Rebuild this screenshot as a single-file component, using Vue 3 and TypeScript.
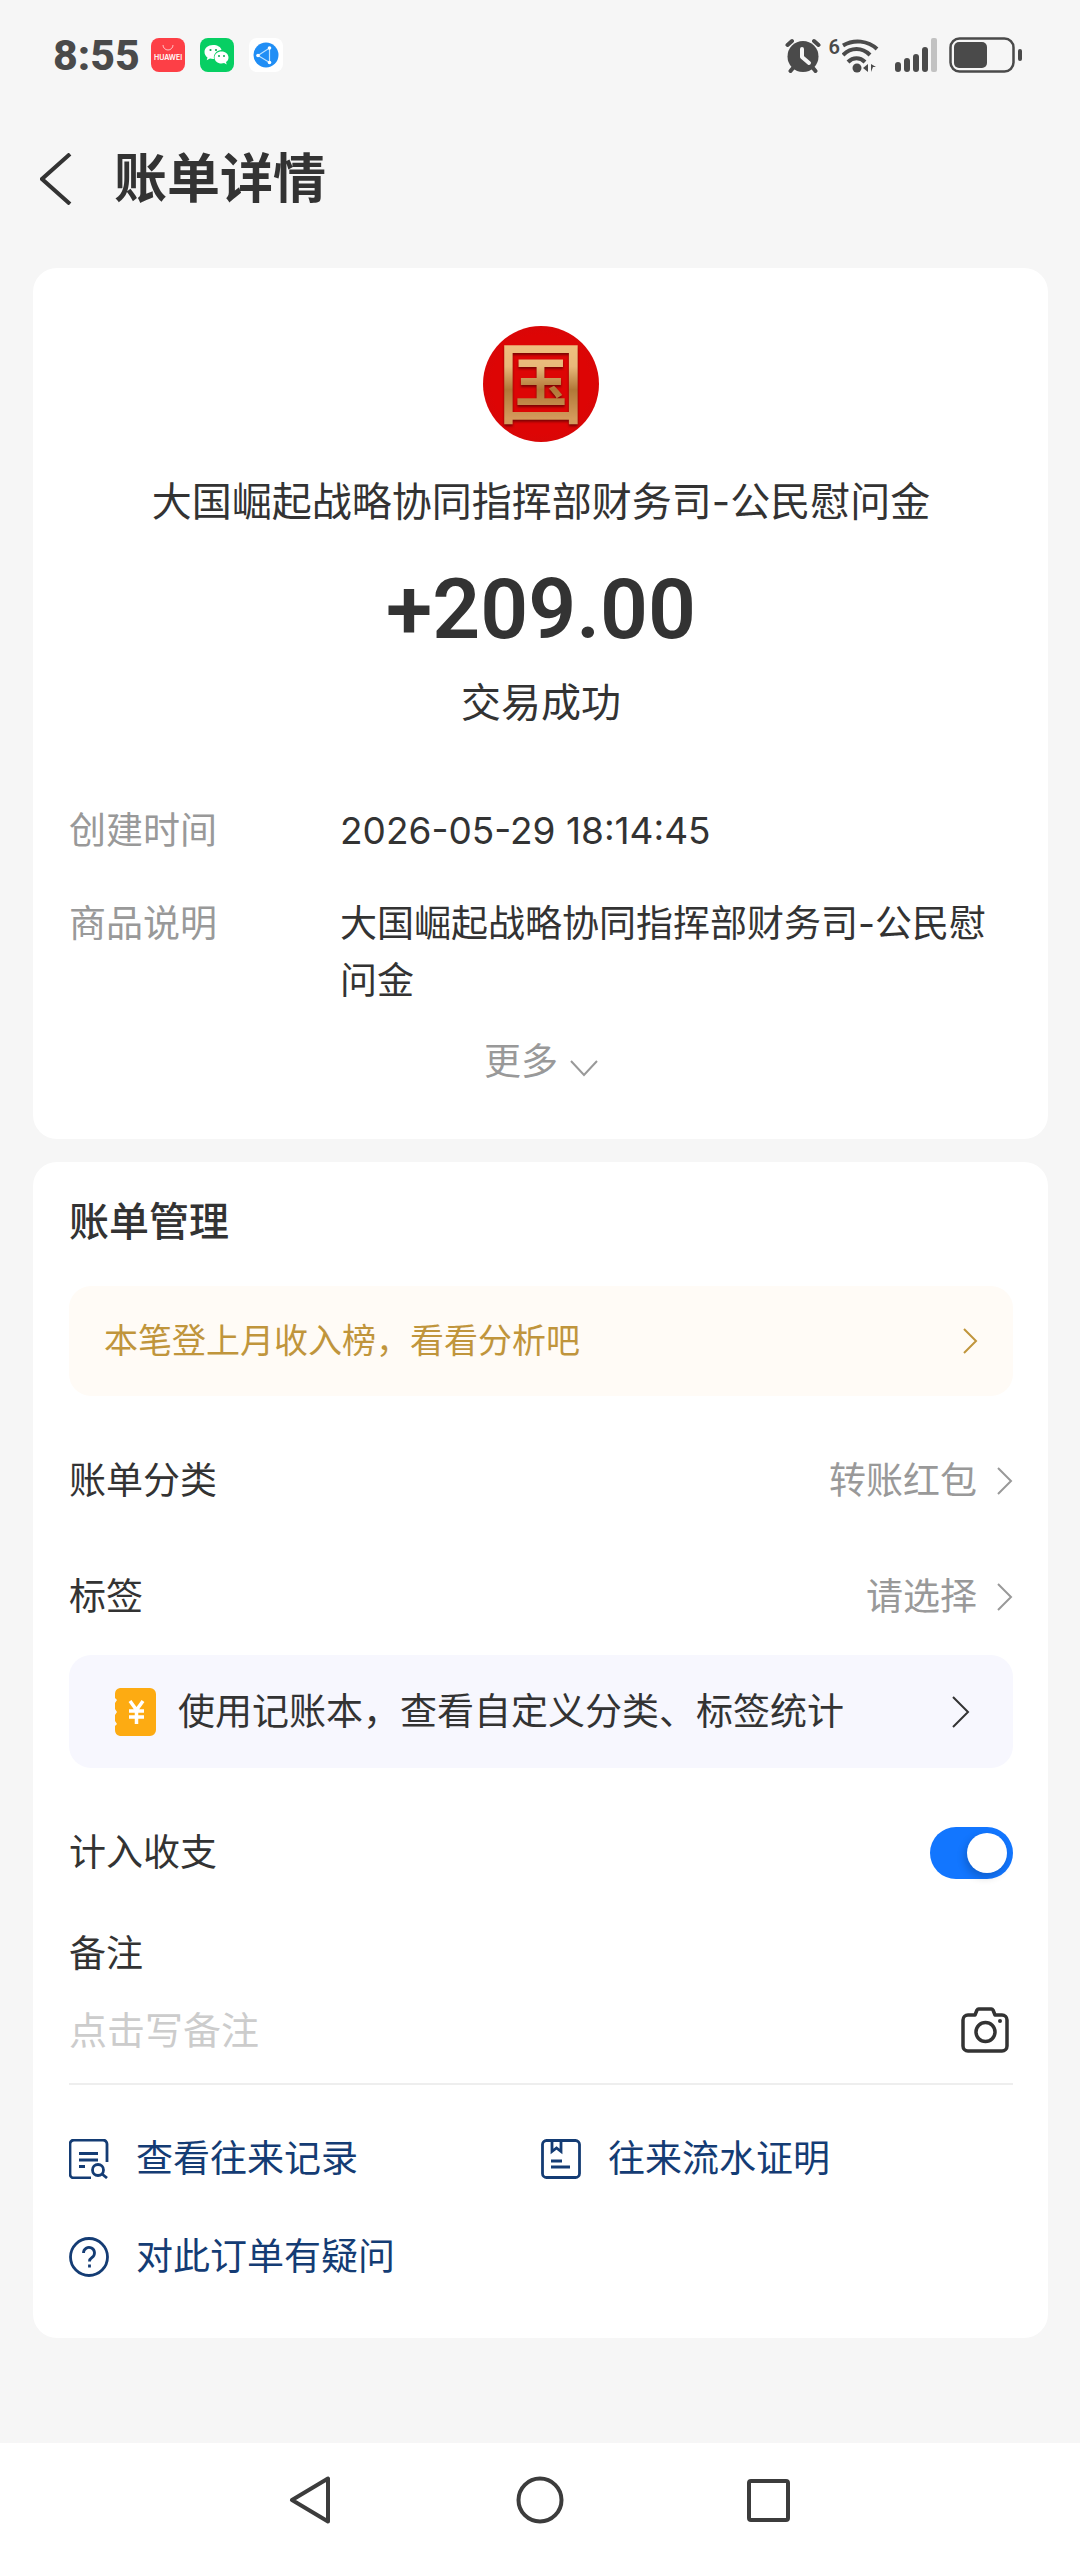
<script setup lang="ts">
import { ref } from 'vue'

interface Detail {
  label: string
  value: string
}

interface PickRow {
  label: string
  value: string
}

interface ActionLink {
  icon: 'records' | 'proof' | 'question'
  text: string
}

const details: Detail[] = [
  { label: '创建时间', value: '2026-05-29 18:14:45' },
  { label: '商品说明', value: '大国崛起战略协同指挥部财务司-公民慰问金' },
]

const pickRows: PickRow[] = [
  { label: '账单分类', value: '转账红包' },
  { label: '标签', value: '请选择' },
]

const actions: ActionLink[] = [
  { icon: 'records', text: '查看往来记录' },
  { icon: 'proof', text: '往来流水证明' },
  { icon: 'question', text: '对此订单有疑问' },
]

const counted = ref<boolean>(true)
const note = ref<string>('')
</script>

<template>
  <div class="page">
    <div class="status-bar">
      <span class="clock">8:55</span>
      <div class="notices">
        <svg width="34" height="34" viewBox="0 0 34 34" aria-hidden="true">
          <rect width="34" height="34" rx="8" fill="#fd3f46" />
          <path d="M12 7a5 5 0 0 0 10 0" fill="none" stroke="#ffc4c6" stroke-width="1" />
          <text x="17" y="22" class="brand" text-anchor="middle">HUAWEI</text>
        </svg>
        <svg width="34" height="34" viewBox="0 0 34 34" aria-hidden="true">
          <rect width="34" height="34" rx="8" fill="#07cf63" />
          <path d="M13 7c-5 0-8.500 3-8.500 7 0 2.300 1.200 4.200 3 5.500l-.8 2.700 3.300-1.600c1 .3 2 .4 3 .4h1c-1-5 3-9 7.500-9C21 9 17.500 7 13 7z" fill="#fff" />
          <path d="M21.500 13.500c-4 0-7 2.600-7 6s3 6 7 6c1 0 1.800-.1 2.600-.4l2.600 1.300-.7-2.300c1.500-1 2.500-2.700 2.500-4.600 0-3.400-3-6-7-6z" fill="#fff" />
          <g fill="#07a850"><circle cx="10.500" cy="12" r="1.100" /><circle cx="16" cy="12" r="1.100" /><circle cx="19" cy="18" r="1" /><circle cx="24" cy="18" r="1" /></g>
        </svg>
        <svg width="34" height="34" viewBox="0 0 34 34" aria-hidden="true">
          <rect width="34" height="34" rx="8" fill="#fff" />
          <circle cx="17" cy="17" r="12.500" fill="#208ef5" />
          <path d="M9 17.500L20.500 10v14.500z" fill="none" stroke="#bfe3ff" stroke-width="1.200" />
          <g fill="#fff"><circle cx="9" cy="17.500" r="1.800" /><circle cx="20.500" cy="10" r="1.800" /><circle cx="20.500" cy="24.500" r="1.800" /></g>
        </svg>
      </div>
      <div class="signals">
        <svg width="36" height="35" viewBox="0 0 36 35" aria-hidden="true">
          <g stroke="#4a4a4a" stroke-width="4" stroke-linecap="round">
            <path d="M2.500 7L7 3M29 3l4.500 4M8 30l-2.500 3M28 30l2.500 3" />
          </g>
          <circle cx="18" cy="18.500" r="15.500" fill="#4a4a4a" />
          <path d="M17 11v8l7 6" fill="none" stroke="#f6f6f6" stroke-width="4" stroke-linecap="round" stroke-linejoin="round" />
        </svg>
        <div class="wifi">
          <span>6</span>
          <svg width="37" height="37" viewBox="11 0 37 37" aria-hidden="true">
            <g fill="none" stroke="#4a4a4a" stroke-width="4">
              <path d="M12 8.500C23 2 37 3.500 46 12" />
              <path d="M12 18c8-8 19-8 27 0" />
              <path d="M17 25c5-5 12-5 17 0" />
            </g>
            <circle cx="26" cy="31" r="4.500" fill="#4a4a4a" />
            <path d="M37 27v8l-5-4zM40 27l5 3h-3l-2 5z" fill="#4a4a4a" />
          </svg>
        </div>
        <svg width="44" height="36" viewBox="0 0 44 36" aria-hidden="true">
          <g fill="#4a4a4a">
            <rect x="0" y="25" width="6" height="10" rx="3" />
            <rect x="9" y="21" width="6" height="14" rx="3" />
            <rect x="18" y="17" width="6" height="18" rx="3" />
            <rect x="27" y="10" width="6" height="25" rx="3" />
          </g>
          <rect x="36" y="1" width="6" height="34" rx="2" fill="#c2c2c2" />
        </svg>
        <svg width="74" height="36" viewBox="0 0 74 36" aria-hidden="true">
          <rect x="1.500" y="1.500" width="63" height="33" rx="9" fill="none" stroke="#4a4a4a" stroke-width="2.500" />
          <rect x="5" y="5" width="33" height="26" rx="5" fill="#4a4a4a" />
          <rect x="69" y="12" width="4" height="12" rx="2" fill="#4a4a4a" />
        </svg>
      </div>
    </div>

    <header class="header">
      <button class="back" type="button" aria-label="返回">
        <svg width="32" height="52" viewBox="0 0 32 52" aria-hidden="true">
          <path d="M30 1L2 26l28 25" fill="none" stroke="#333" stroke-width="4" />
        </svg>
      </button>
      <h1>账单详情</h1>
    </header>

    <main class="cards">
      <section class="card summary">
        <div class="avatar"><span>国</span></div>
        <p class="payee">大国崛起战略协同指挥部财务司-公民慰问金</p>
        <p class="amount">+209.00</p>
        <p class="state">交易成功</p>
        <dl class="details">
          <div v-for="item in details" :key="item.label" class="detail">
            <dt>{{ item.label }}</dt>
            <dd>{{ item.value }}</dd>
          </div>
        </dl>
        <button class="more" type="button">
          更多
          <svg width="28" height="18" viewBox="0 0 28 18" aria-hidden="true">
            <path d="M1 2l13 14L27 2" fill="none" stroke="#999" stroke-width="2" />
          </svg>
        </button>
      </section>

      <section class="card manage">
        <h2>账单管理</h2>
        <a class="strip rank" href="#">
          <span>本笔登上月收入榜，看看分析吧</span>
          <svg width="16" height="26" viewBox="0 0 16 26" aria-hidden="true">
            <path d="M2 1l12 12L2 25" fill="none" stroke="#c0953c" stroke-width="2" />
          </svg>
        </a>

        <button v-for="row in pickRows" :key="row.label" class="row" type="button">
          <span>{{ row.label }}</span>
          <span class="picked">
            {{ row.value }}
            <svg width="16" height="28" viewBox="0 0 16 28" aria-hidden="true">
              <path d="M1 1l13 13L1 27" fill="none" stroke="#999" stroke-width="2" />
            </svg>
          </span>
        </button>

        <a class="strip book" href="#">
          <svg width="42" height="48" viewBox="0 0 42 48" aria-hidden="true">
            <path d="M6 0h30a6 6 0 0 1 6 6v36a6 6 0 0 1-6 6H6a6 6 0 0 1-5-6v-4l2-2-2-3v-6l2-3-2-3v-6l2-3-2-2V6a6 6 0 0 1 5-6z" fill="#fdab12" />
            <path d="M16 13l6.500 9L29 13M22.500 22v14M15 23h15M15 29h15" fill="none" stroke="#fff" stroke-width="3.500" />
          </svg>
          <span>使用记账本，查看自定义分类、标签统计</span>
          <svg width="20" height="32" viewBox="0 0 20 32" aria-hidden="true">
            <path d="M2 1l15 15L2 31" fill="none" stroke="#333" stroke-width="2" />
          </svg>
        </a>

        <div class="row switch-row">
          <label for="counted">计入收支</label>
          <input id="counted" v-model="counted" class="switch" type="checkbox" role="switch" />
        </div>

        <label class="note-label" for="note">备注</label>
        <div class="note">
          <input id="note" v-model="note" type="text" placeholder="点击写备注" />
          <button type="button" aria-label="添加图片">
            <svg width="48" height="46" viewBox="0 0 48 46" aria-hidden="true">
              <path d="M7 8h7l2-5a2 2 0 0 1 2-1h12a2 2 0 0 1 2 1l2 5h7a5 5 0 0 1 5 5v26a5 5 0 0 1-5 5H7a5 5 0 0 1-5-5V13a5 5 0 0 1 5-5z" fill="none" stroke="#333" stroke-width="3.500" stroke-linejoin="round" />
              <circle cx="24.500" cy="25" r="9.500" fill="none" stroke="#333" stroke-width="3.500" />
              <circle cx="39" cy="14" r="2" fill="#333" />
            </svg>
          </button>
        </div>

        <nav class="actions">
          <a v-for="action in actions" :key="action.text" href="#">
            <svg width="40" height="40" viewBox="0 0 40 40" fill="none" stroke="#143c74" stroke-width="2.800" aria-hidden="true">
              <g v-if="action.icon === 'records'">
                <path d="M38 23V5a4 4 0 0 0-4-4H5a4 4 0 0 0-4 4v30a4 4 0 0 0 4 4h17" />
                <path d="M10 14.500h19M10 21h19M10 27.500h6" />
                <circle cx="29" cy="31" r="5.500" />
                <path d="M33 35l5 4" />
              </g>
              <g v-else-if="action.icon === 'proof'">
                <rect x="1.500" y="1.500" width="37" height="37" rx="4" />
                <path d="M11 2v10.500l4.500-3.500 4.500 3.500V2M10 22h11M10 28h19" />
              </g>
              <g v-else>
                <circle cx="20" cy="20" r="18.500" />
                <path d="M14.500 16a5.500 5.500 0 1 1 8.500 4.500c-2 1.300-2.500 2-2.500 4" />
                <path d="M20.500 27.500v3" />
              </g>
            </svg>
            {{ action.text }}
          </a>
        </nav>
      </section>
    </main>

    <nav class="system-nav">
      <button type="button" aria-label="后退">
        <svg width="48" height="48" viewBox="0 0 48 48" aria-hidden="true">
          <path d="M40 2.500v43L4 24z" fill="none" stroke="#3c3c3c" stroke-width="4" stroke-linejoin="round" />
        </svg>
      </button>
      <button type="button" aria-label="主屏幕">
        <svg width="48" height="48" viewBox="0 0 48 48" aria-hidden="true">
          <circle cx="24" cy="24" r="21.500" fill="none" stroke="#3c3c3c" stroke-width="4" />
        </svg>
      </button>
      <button type="button" aria-label="最近任务">
        <svg width="48" height="48" viewBox="0 0 48 48" aria-hidden="true">
          <rect x="5" y="5" width="39" height="39" rx="2" fill="none" stroke="#3c3c3c" stroke-width="4" />
        </svg>
      </button>
    </nav>
  </div>
</template>

<style>
body {
  margin: 0;
  background: #f6f6f6;
}
</style>

<style scoped>
.page {
  display: flex;
  flex-direction: column;
  min-height: 100vh;
  color: #333;
  font-family: Inter, "Noto Sans CJK SC", sans-serif;
  font-size: 37px;
  line-height: 56px;
}

svg {
  display: block;
  flex: none;
}

h1,
h2,
p,
dl,
dd {
  margin: 0;
}

button,
input {
  padding: 0;
  border: 0;
  background: none;
  color: inherit;
  font: inherit;
}

a {
  color: inherit;
  text-decoration: none;
}

.status-bar {
  display: flex;
  align-items: center;
  height: 110px;
  padding: 0 57px 2px 53px;
}

.clock {
  color: #4a4a4a;
  font-family: Roboto, sans-serif;
  font-size: 43px;
  font-weight: 800;
}

.notices {
  display: flex;
  gap: 15px;
  margin-left: 11px;
}

.brand {
  fill: #fff;
  font-family: Inter, sans-serif;
  font-size: 7px;
  font-weight: 600;
}

.signals {
  display: flex;
  align-items: center;
  gap: 8px;
  margin-left: auto;
}

.wifi {
  display: flex;
  align-items: flex-start;
  margin-right: 8px;
  color: #4a4a4a;
  font-family: Roboto, sans-serif;
  font-size: 20px;
  font-weight: 600;
  line-height: 20px;
}

.signals svg:last-child {
  margin-left: 2px;
}

.header {
  display: flex;
  align-items: center;
  gap: 42px;
  height: 130px;
  padding: 2px 40px 0;
}

h1 {
  font-size: 53px;
  font-weight: 600;
  line-height: 72px;
}

.cards {
  display: flex;
  flex-direction: column;
  gap: 23px;
  margin: 24px 32px 40px 33px;
}

.card {
  padding: 32px 35px 32px 36px;
  border-radius: 24px;
  background: #fff;
}

.summary {
  display: flex;
  flex-direction: column;
  align-items: center;
  padding-top: 58px;
  padding-bottom: 49px;
}

.avatar {
  display: flex;
  align-items: center;
  justify-content: center;
  box-sizing: border-box;
  width: 116px;
  height: 116px;
  padding-bottom: 12px;
  border-radius: 50%;
  background: radial-gradient(#dd0505 60%, #cf0a0c);
}

.avatar span {
  background: linear-gradient(#f0c080 20%, #e8b87a 40%, #b07838 60%, #d49a5c 85%);
  background-clip: text;
  color: transparent;
  filter: drop-shadow(0 2px 1px #7d0303);
  font-family: "Noto Sans CJK SC", sans-serif;
  font-size: 88px;
  font-weight: 500;
  line-height: 116px;
}

.payee,
.state {
  font-size: 40px;
}

.payee {
  margin-top: 32px;
}

.amount {
  margin-top: 30px;
  font-family: Roboto, sans-serif;
  font-size: 84px;
  font-weight: 600;
  line-height: 100px;
}

.state {
  margin-top: 15px;
}

.details {
  display: grid;
  gap: 36px;
  align-self: stretch;
  margin-top: 71px;
  line-height: 57px;
}

.detail {
  display: flex;
}

.detail dt {
  flex: none;
  width: 271px;
  color: #999;
}

.more {
  display: flex;
  align-items: center;
  gap: 12px;
  margin-top: 25px;
  color: #999;
}

.more svg {
  margin-top: 12px;
}

.manage {
  display: flex;
  flex-direction: column;
}

h2 {
  font-size: 40px;
  font-weight: 500;
}

.strip {
  display: flex;
  align-items: center;
  border-radius: 22px;
}

.strip span {
  flex: 1;
}

.rank {
  height: 110px;
  margin: 36px 0 27px;
  padding: 0 35px;
  background: #fffbf6;
  color: #c0953c;
  font-size: 34px;
}

.row {
  display: flex;
  align-items: center;
  justify-content: space-between;
  height: 116px;
}

.picked {
  display: flex;
  align-items: center;
  gap: 20px;
  color: #999;
}

.book {
  gap: 22px;
  height: 113px;
  padding: 0 42px 0 45px;
  background: #f7f7fe;
}

.switch-row {
  height: 104px;
  margin-top: 33px;
}

.switch {
  display: flex;
  justify-content: flex-end;
  box-sizing: border-box;
  width: 83px;
  height: 52px;
  margin: 0;
  padding: 6px;
  border-radius: 26px;
  background: #ccc;
  appearance: none;
}

.switch:not(:checked) {
  justify-content: flex-start;
}

.switch:checked {
  background: #1276ff;
}

.switch::before {
  width: 40px;
  height: 40px;
  border-radius: 50%;
  background: #fff;
  box-shadow: -2px 4px 8px rgb(0 0 0 / 20%);
  content: "";
}

.note-label {
  margin-top: 21px;
}

.note {
  display: flex;
  align-items: center;
  justify-content: space-between;
  padding: 20px 4px 25px 0;
  border-bottom: 2px solid #eee;
}

.note input {
  flex: 1;
  min-width: 0;
  height: 56px;
  font-size: 38px;
}

.note input::placeholder {
  color: #ccc;
  opacity: 1;
}

.actions {
  display: grid;
  grid-template-columns: 1fr 1fr;
  grid-auto-rows: 98px;
  margin-top: 25px;
  color: #143c74;
}

.actions a {
  display: flex;
  align-items: center;
  gap: 27px;
}

.system-nav {
  display: flex;
  align-items: center;
  justify-content: center;
  gap: 180px;
  height: 114px;
  margin-top: auto;
  background: #fff;
}
</style>
